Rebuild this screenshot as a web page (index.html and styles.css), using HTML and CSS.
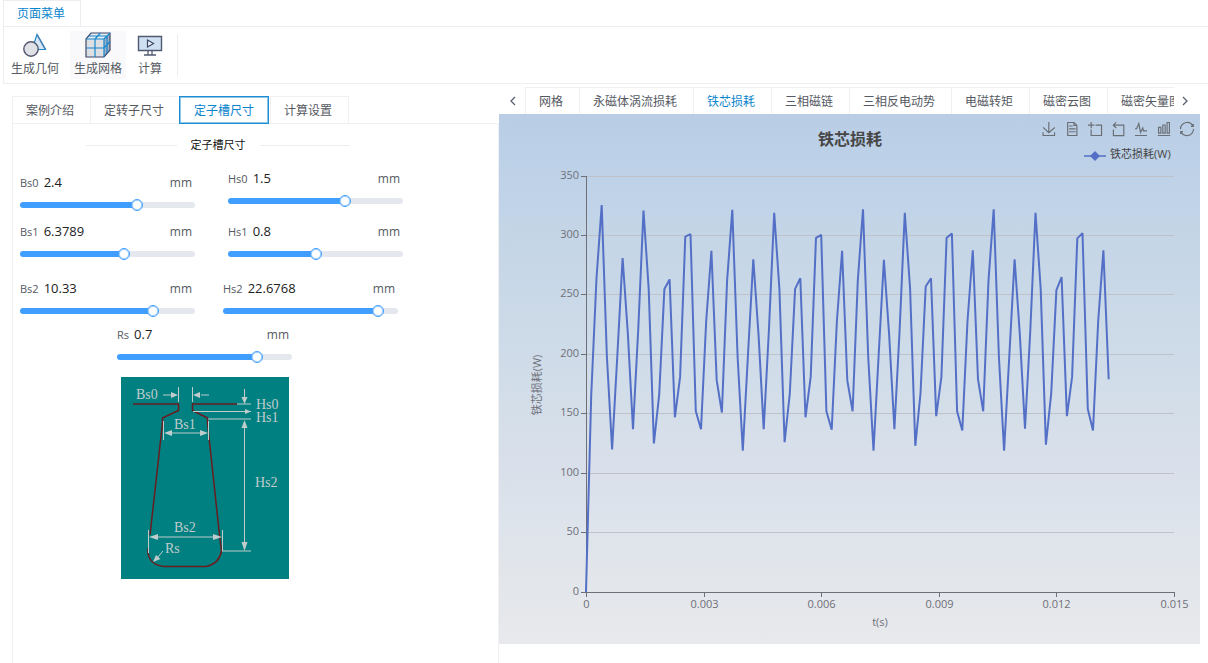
FILE: index.html
```html
<!DOCTYPE html>
<html lang="zh-CN">
<head>
    <meta charset="UTF-8">
    <meta name="viewport" content="width=device-width, initial-scale=1.0">
    <title>定子槽尺寸</title>
    <link rel="stylesheet" href="styles.css">
</head>
<body>
    <header class="menu">
        <div class="menu-tabs">
            <button class="menu-tab">页面菜单</button>
        </div>
        <div class="ribbon">
            <button class="tool">
                <svg class="tool-icon" viewBox="0 0 26 26">
                    <path d="M15 2.5L23.5 17.5H10z" fill="#d6e8f7" stroke="#2089cb" stroke-width="1.2"/>
                    <path d="M15 2.5L23.5 17.5" stroke="#4a7fae" stroke-width="1.5"/>
                    <circle cx="9" cy="17" r="7.2" fill="#dfe1e5" stroke="#53566e" stroke-width="1.4"/>
                </svg>
                <span>生成几何</span>
            </button>
            <button class="tool hovered">
                <svg class="tool-icon" viewBox="0 0 26 26">
                    <path d="M1 7L6 1H25L19 7z" fill="#e4eaf1"/>
                    <path d="M19 7L25 1V18L19 25z" fill="#9fb1c8"/>
                    <path d="M1 7H19V25H1z" fill="#dcdfe4"/>
                    <path d="M1 25V7L6 1H25V18L19 25z" fill="none" stroke="#3f4766" stroke-width="1.2"/>
                    <path d="M10 7V25M1 16H19L25 9.5M10 7L15.5 1M3.5 4H22V21.5M1 7H19V25M19 7L25 1" fill="none" stroke="#1686cc" stroke-width="1.2"/>
                </svg>
                <span>生成网格</span>
            </button>
            <button class="tool">
                <svg class="tool-icon" viewBox="0 0 26 26">
                    <path d="M1.5 4.5H24.5V18.5H1.5z" fill="#cfe0f2" stroke="#4f5a70" stroke-width="1.4"/>
                    <path d="M10.5 8L16.5 11.5L10.5 15z" fill="#eef4fb" stroke="#3b4763" stroke-width="1.2"/>
                    <path d="M11 19V22.5M15 19V22.5M7 23H19" stroke="#4f5a70" stroke-width="1.3"/>
                </svg>
                <span>计算</span>
            </button>
            <span class="ribbon-line"></span>
        </div>
    </header>

    <main class="content">
        <section class="left">
            <nav class="tabs left-tabs">
                <button class="tab">案例介绍</button>
                <button class="tab">定转子尺寸</button>
                <button class="tab boxed">定子槽尺寸</button>
                <button class="tab">计算设置</button>
            </nav>
            <form class="form">
                <div class="divider"><span>定子槽尺寸</span></div>

                <div class="row row-first">
                    <div class="field">
                        <div class="field-head">
                            <label for="bs0">Bs0</label>
                            <input class="number" id="bs0" type="text" value="2.4">
                            <span class="unit">mm</span>
                        </div>
                        <input class="slider" type="range" aria-label="Bs0" min="0" max="3.54" step="any" value="2.4">
                    </div>
                    <div class="field raised">
                        <div class="field-head">
                            <label for="hs0">Hs0</label>
                            <input class="number" id="hs0" type="text" value="1.5">
                            <span class="unit">mm</span>
                        </div>
                        <input class="slider" type="range" aria-label="Hs0" min="0" max="2.2" step="any" value="1.5">
                    </div>
                </div>

                <div class="row row-second">
                    <div class="field">
                        <div class="field-head">
                            <label for="bs1">Bs1</label>
                            <input class="number" id="bs1" type="text" value="6.3789">
                            <span class="unit">mm</span>
                        </div>
                        <input class="slider" type="range" aria-label="Bs1" min="0" max="10.56" step="any" value="6.3789">
                    </div>
                    <div class="field">
                        <div class="field-head">
                            <label for="hs1">Hs1</label>
                            <input class="number" id="hs1" type="text" value="0.8">
                            <span class="unit">mm</span>
                        </div>
                        <input class="slider" type="range" aria-label="Hs1" min="0" max="1.6" step="any" value="0.8">
                    </div>
                </div>

                <div class="row row-third">
                    <div class="field">
                        <div class="field-head">
                            <label for="bs2">Bs2</label>
                            <input class="number" id="bs2" type="text" value="10.33">
                            <span class="unit">mm</span>
                        </div>
                        <input class="slider" type="range" aria-label="Bs2" min="0" max="13.3" step="any" value="10.33">
                    </div>
                    <div class="field">
                        <div class="field-head">
                            <label for="hs2">Hs2</label>
                            <input class="number" id="hs2" type="text" value="22.6768">
                            <span class="unit">mm</span>
                        </div>
                        <input class="slider" type="range" aria-label="Hs2" min="0" max="24.8" step="any" value="22.6768">
                    </div>
                </div>

                <div class="row row-last">
                    <div class="field">
                        <div class="field-head">
                            <label for="rs">Rs</label>
                            <input class="number" id="rs" type="text" value="0.7">
                            <span class="unit">mm</span>
                        </div>
                        <input class="slider" type="range" aria-label="Rs" min="0" max="0.85" step="any" value="0.7">
                    </div>
                </div>

                <svg class="slot" viewBox="0 0 168 202">
                    <rect width="168" height="202" fill="#008080"/>
                    <!-- slot outline -->
                    <path d="M12 27H57.5V33.5L41.5 41V46L29 158M27 171V176Q29 188 43 189.5H85Q98 187 100.5 174L98.5 158L86.5 46V41L71.5 33.5V27H116" fill="none" stroke="#6a1c20" stroke-width="1.5"/>
                    <!-- dimension lines -->
                    <g fill="none" stroke="#c0cccc" stroke-width="1">
                        <path d="M57.5 10V25M71.5 10V25M42 18H50M80 18H88"/>
                        <path d="M123.5 12V20M116 27H130M72 34.5H130M87 42H130M123.5 50V165"/>
                        <path d="M42.5 44V63M87.5 44V63M48 56H82"/>
                        <path d="M27.5 153V176M101.5 153V174M34 160H95M101 174H130"/>
                        <path d="M42 174L37 180"/>
                    </g>
                    <g fill="#c0cccc">
                        <path d="M57 18L50 15V21zM72 18L79 15V21z"/>
                        <path d="M123.5 27L120.5 20H126.5zM130 34.5L124 32V37z"/>
                        <path d="M43 56L51 53V59zM87 56L79 53V59z"/>
                        <path d="M28 160L37 157V163zM101 160L92 157V163z"/>
                        <path d="M123.5 43L120.5 51H126.5zM123.5 174L120.5 165H126.5z"/>
                        <path d="M32 185L35 178L39.5 182z"/>
                    </g>
                    <g class="slot-text">
                        <text x="15" y="22">Bs0</text>
                        <text x="135" y="32">Hs0</text>
                        <text x="135" y="45">Hs1</text>
                        <text x="53" y="52">Bs1</text>
                        <text x="134" y="110">Hs2</text>
                        <text x="53" y="155">Bs2</text>
                        <text x="44" y="176">Rs</text>
                    </g>
                </svg>
            </form>
        </section>

        <section class="right">
            <div class="tab-scroll">
                <button class="arrow" aria-label="prev"><svg viewBox="0 0 12 12"><path d="M8 2L4 6L8 10"/></svg></button>
                <nav class="tabs right-tabs">
                    <button class="tab">网格</button>
                    <button class="tab">永磁体涡流损耗</button>
                    <button class="tab active">铁芯损耗</button>
                    <button class="tab">三相磁链</button>
                    <button class="tab">三相反电动势</button>
                    <button class="tab">电磁转矩</button>
                    <button class="tab">磁密云图</button>
                    <button class="tab">磁密矢量图</button>
                </nav>
                <button class="arrow" aria-label="next"><svg viewBox="0 0 12 12"><path d="M4 2L8 6L4 10"/></svg></button>
            </div>

            <div class="chart">
                <div class="toolbox">
                    <button aria-label="保存为图片"><svg viewBox="0 0 60 60"><path d="M4.7,22.9L29.3,45.5L54.7,23.4M4.6,43.6L4.6,58L53.8,58L53.8,43.6M29.2,45.1L29.2,0"/></svg></button>
                    <button aria-label="数据视图"><svg viewBox="0 0 60 60"><path d="M17.5,17.3H33M45.4,29.5h-28M11.5,2v56H51V14.8L38.4,2H11.5zM38.4,2.2v12.7H51M45.4,41.7h-28"/></svg></button>
                    <button aria-label="区域缩放"><svg viewBox="0 0 60 60"><path d="M0,13.5h26.9M13.5,26.9V0M32.1,13.5H58V58H13.5V32.1"/></svg></button>
                    <button aria-label="缩放还原"><svg viewBox="0 0 60 60"><path d="M22,1.4L9.9,13.5l12.3,12.3M10.3,13.5H54.9v44.6H10.3v-26"/></svg></button>
                    <button aria-label="折线图"><svg viewBox="0 0 60 60"><path d="M4.1,28.9h7.1l9.3-22l7.4,38l9.7-19.7l3,12.8h14.9M4.1,58h51.4"/></svg></button>
                    <button aria-label="柱状图"><svg viewBox="0 0 60 60"><path d="M6.7,22.9h10V48h-10V22.9zM24.9,13h10v35h-10V13zM43.2,2h10v46h-10V2zM3.1,58h53.7"/></svg></button>
                    <button aria-label="还原"><svg viewBox="0 0 60 60"><path d="M47,18.9h9.8V8.7M56.3,20.1C52.1,9,40.5,0.6,26.8,2.1C12.6,3.7,1.6,16.2,2.1,30.6M13,41.1H3.1v10.2M3.7,39.9c4.2,11.1,15.8,19.5,29.5,18c14.2-1.6,25.2-14.1,24.7-28.5"/></svg></button>
                </div>
                <svg class="plot" id="plot" viewBox="0 0 701 530">
                    <text class="title" x="351" y="31">铁芯损耗</text>
                    <path d="M585 42H607" stroke="#5470c6" stroke-width="1.5"/>
                    <path d="M596 37L601 42L596 47L591 42z" fill="#5470c6"/>
                    <text class="legend" x="611" y="44">铁芯损耗(W)</text>
                    <g id="axes"></g>
                    <text class="label" x="381" y="512" text-anchor="middle">t(s)</text>
                    <text class="label" transform="translate(42 271) rotate(-90)" text-anchor="middle">铁芯损耗(W)</text>
                    <polyline class="series" id="series"/>
                </svg>
            </div>
        </section>
    </main>

    <script src="script.js"></script>
</body>
</html>
```
FILE: styles.css
```css
* {
    box-sizing: border-box;
}
body {
    margin: 0;
    min-height: 100vh;
    display: flex;
    flex-direction: column;
    background: #fff;
    color: #555962;
    font-family: "Open Sans", "Noto Sans CJK SC", sans-serif;
    font-size: 12px;
}
button {
    margin: 0;
    padding: 0;
    border: none;
    background: none;
    color: inherit;
    font: inherit;
    cursor: pointer;
}

/* top menu */
.menu {
    margin-left: 3px;
}
.menu-tabs {
    display: flex;
    border-bottom: 1px solid #eeeef2;
}
.menu-tab {
    height: 26px;
    padding: 0 15px 2px 13px;
    border: 1px solid #eeeef2;
    border-bottom: none;
    color: #0a84cc;
}
.ribbon {
    display: flex;
    align-items: center;
    gap: 7px;
    height: 57px;
    padding-left: 3px;
    border-left: 1px solid #eeeef2;
    border-bottom: 1px solid #eeeef2;
}
.tool {
    display: flex;
    flex-direction: column;
    align-items: center;
    gap: 3px;
    height: 48px;
    padding: 1px 4px;
    line-height: 16px;
}
.tool.hovered {
    background: #f9f9fb;
}
.tool-icon {
    width: 26px;
    height: 26px;
    fill: none;
}
.ribbon-line {
    width: 1px;
    height: 42px;
    margin-left: 3px;
    background: #eeeef2;
}

/* two panes */
.content {
    flex: 1;
    display: grid;
    grid-template-columns: minmax(0, 487fr) minmax(0, 701fr);
    margin: 0 8px 0 12px;
}
.left {
    display: flex;
    flex-direction: column;
    padding-top: 12px;
}
.tabs {
    display: flex;
}
.tab {
    flex: none;
    height: 27px;
    padding: 0 16px 0 13px;
    border-top: 1px solid #f0f0f2;
    border-left: 1px solid #f0f0f2;
}
.tab.active {
    color: #0a84cc;
}
.tab.boxed {
    height: 28px;
    margin: 0 1px -1px -1px;
    padding: 0 14px;
    border: 1px solid #1b8dd0;
    outline: 1px solid #8cc6e8;
    outline-offset: -2px;
    color: #0a84cc;
}
.left-tabs {
    border-bottom: 1px solid #f0f0f2;
}
.left-tabs .tab:last-child {
    border-right: 1px solid #f0f0f2;
}

/* size form */
.form {
    flex: 1;
    padding: 12px 0 0 7px;
    border-left: 1px solid #f0f0f2;
    border-right: 1px solid #f0f0f2;
}
.divider {
    display: flex;
    align-items: center;
    gap: 14px;
    width: 264px;
    height: 18px;
    margin-left: 66px;
    color: #111;
    font-size: 11px;
    line-height: 18px;
}
.divider::before,
.divider::after {
    content: "";
    flex: 1;
    height: 1px;
    background: #eeeef2;
}
.row {
    display: flex;
    align-items: flex-end;
    gap: 33px;
}
.row-first {
    height: 44px;
    margin-top: 15px;
}
.row-second {
    margin-top: 9px;
}
.row-third {
    gap: 28px;
    margin-top: 17px;
}
.row-last {
    margin-top: 6px;
    padding-left: 97px;
}
.field {
    width: 175px;
}
.field.raised {
    align-self: flex-start;
}
.field-head {
    display: flex;
    align-items: center;
    gap: 5px;
    height: 18px;
    margin-bottom: 6px;
}
.field-head label {
    font-size: 11px;
}
.number {
    flex: 1;
    min-width: 0;
    padding: 0;
    border: none;
    outline: none;
    background: none;
    color: #222;
    font: inherit;
    font-size: 13px;
}
.unit {
    margin-right: 3px;
}
.slider {
    --fill: 0;
    display: block;
    appearance: none;
    width: 100%;
    height: 16px;
    margin: 0;
    background: none;
}
.slider::-webkit-slider-runnable-track {
    height: 6px;
    border-radius: 3px;
    background: linear-gradient(to right, #409eff calc(6px + (100% - 12px) * var(--fill)), #e4e7ed 0);
}
.slider::-webkit-slider-thumb {
    appearance: none;
    width: 12px;
    height: 12px;
    margin-top: -3px;
    border: 1px solid #409eff;
    border-radius: 50%;
    background: #fff;
    box-shadow: inset 0 0 0 1px #a0cfff;
}
.slot {
    display: block;
    width: 168px;
    margin: 12px 0 0 101px;
}
.slot-text {
    fill: #c0cccc;
    font-family: "Liberation Serif", serif;
    font-size: 14px;
}

/* result charts */
.right {
    padding-top: 3px;
}
.tab-scroll {
    display: flex;
}
.right-tabs {
    flex: 1;
    overflow: hidden;
}
.arrow {
    flex: none;
    display: flex;
    align-items: center;
    justify-content: center;
    width: 26px;
    height: 27px;
    padding-left: 2px;
}
.arrow:last-child {
    padding: 0 4px 0 0;
}
.arrow svg {
    width: 12px;
    fill: none;
    stroke: #5c6070;
    stroke-width: 1.3;
}
.chart {
    position: relative;
    background: linear-gradient(#b9cee5, #c0d3e9 17%, #c4d5e6 22%, #d3dee9 55%, #d8dfea 65%, #dee4ec 78%, #e1e5ea 85%, #e8e9ec);
}
.toolbox {
    position: absolute;
    top: 8px;
    right: 6px;
    display: flex;
    gap: 9px;
}
.toolbox button {
    width: 14px;
    height: 14px;
}
.toolbox svg {
    display: block;
    overflow: visible;
    fill: none;
    stroke: #6a6e75;
    stroke-width: 5;
}
.plot {
    display: block;
    width: 100%;
}
.title {
    fill: #464646;
    font-size: 16px;
    font-weight: bold;
    text-anchor: middle;
}
.legend {
    fill: #444;
    font-size: 11px;
}
.label {
    fill: #6e7079;
    font-size: 11px;
}
.grid-line {
    stroke: #bfc3c9;
}
.axis-line {
    fill: none;
    stroke: #6e7079;
}
.series {
    fill: none;
    stroke: #5470c6;
    stroke-width: 2;
    stroke-linejoin: bevel;
}
```
FILE: script.js
```javascript
// Fill the slider track up to the thumb
document.querySelectorAll('.slider').forEach(slider => {
    const number = slider.parentElement.querySelector('.number');
    const paint = () => slider.style.setProperty('--fill', slider.value / slider.max);
    slider.addEventListener('input', () => {
        number.value = Number(slider.value).toFixed(4);
        paint();
    });
    paint();
});

// Core loss (W), one sample every 1/7500 s
const loss = [
    0, 165, 264, 325.5, 198, 120, 200, 281, 218, 137, 222, 321, 255, 125, 166,
    255, 263, 147, 181, 299, 301, 152, 137, 228, 287,
    178, 151, 262, 321.5, 198, 119, 200, 280, 217, 137, 220, 319, 255, 126, 167,
    255, 264, 147, 181, 298, 300.5, 152, 136.5, 228, 287,
    178, 152, 262, 322, 198, 119, 200, 279.5, 217, 137, 220, 319, 255, 123, 167,
    257, 264, 148, 181, 298, 301.5, 152, 136, 228, 287.5,
    179, 152, 262, 322, 198, 119, 200, 280, 217, 137.5, 220, 319, 255, 124, 167,
    254, 265, 148, 181, 297.5, 302, 154, 136, 228, 287.5,
    179
];

const left = 87, right = 675, topEdge = 62, bottom = 478;
const maxTime = 0.015, maxLoss = 350;
const px = t => left + t / maxTime * (right - left);
const py = v => bottom - v / maxLoss * (bottom - topEdge);

let axes = '';
for (let v = 0; v <= maxLoss; v += 50) {
    const y = Math.floor(py(v)) + 0.5;
    if (v > 0) axes += `<path class="grid-line" d="M${left} ${y}H${right}"/>`;
    axes += `<path class="axis-line" d="M${left - 5} ${y}H${left}"/>`;
    axes += `<text class="label" x="${left - 7}" y="${y + 2}" text-anchor="end">${v}</text>`;
}
for (let i = 0; i <= 5; i++) {
    const x = Math.round(px(i * 0.003)) + 0.5;
    axes += `<path class="axis-line" d="M${x} ${bottom}V${bottom + 5}"/>`;
    axes += `<text class="label" x="${x}" y="${bottom + 16}" text-anchor="middle">${i ? (i * 0.003).toFixed(3) : 0}</text>`;
}
axes += `<path class="axis-line" d="M${left + 0.5} ${topEdge}V${bottom + 0.5}H${right}"/>`;
document.getElementById('axes').innerHTML = axes;

document.getElementById('series').setAttribute('points',
    loss.map((v, i) => `${px(i / 7500).toFixed(1)},${py(v).toFixed(1)}`).join(' '));
```
